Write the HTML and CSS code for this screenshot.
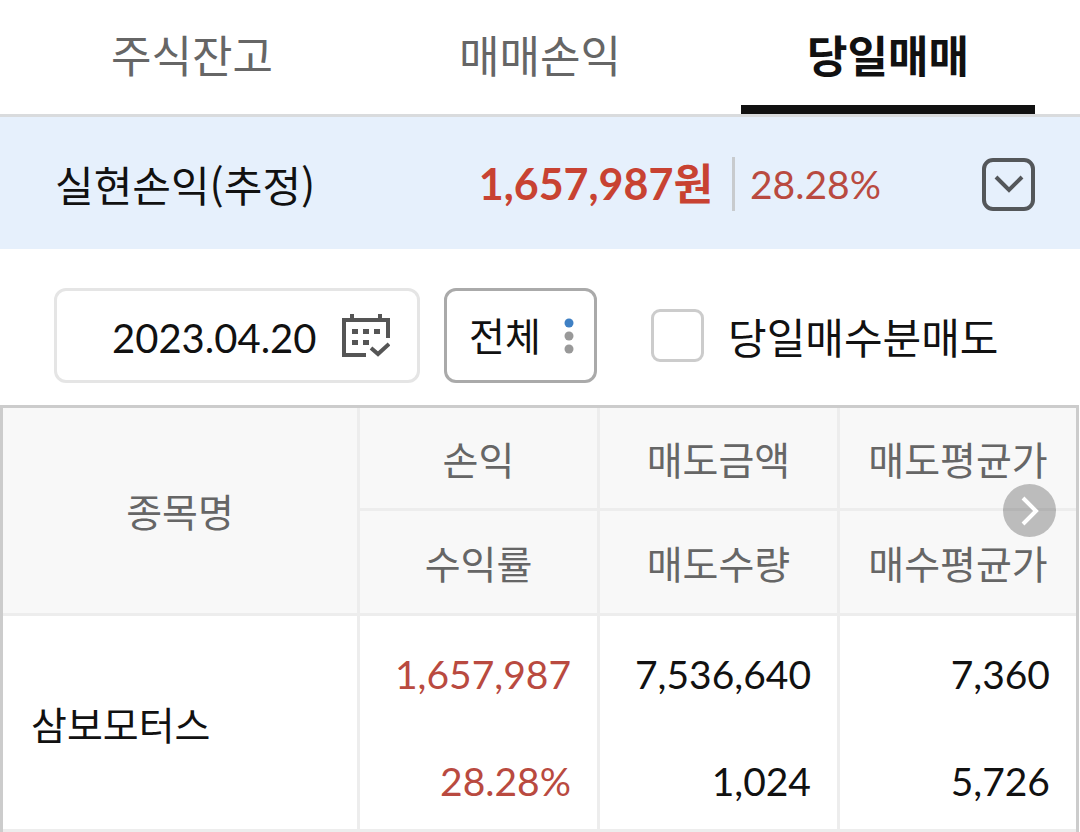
FILE: index.html
```html
<!DOCTYPE html>
<html lang="ko">
<head>
  <meta charset="UTF-8">
  <meta name="viewport" content="width=device-width, initial-scale=1">
  <title>당일매매</title>
  <link rel="stylesheet" href="styles.css">
</head>
<body>
  <nav class="tabs">
    <a class="tab" href="#balance">주식잔고</a>
    <a class="tab" href="#profit">매매손익</a>
    <a class="tab active" href="#today" aria-current="page">당일매매</a>
  </nav>

  <!-- Realized profit summary -->
  <section class="summary">
    <span class="summary-label">실현손익(추정)</span>
    <strong class="summary-amount">1,657,987원</strong>
    <span class="summary-rate">28.28%</span>
    <button class="expand-btn" type="button" aria-label="펼치기">
      <svg width="30" height="18" viewBox="0 0 30 18" fill="none" stroke="#54575a" stroke-width="4">
        <path d="M2 2l13 13L28 2"/>
      </svg>
    </button>
  </section>

  <!-- Filters -->
  <form class="filters">
    <div class="date-box">
      <input class="date-input" type="text" value="2023.04.20" aria-label="조회일자">
      <button class="calendar-btn" type="button" aria-label="달력">
        <svg width="48" height="44" viewBox="0 0 48 44">
          <path d="M24 41H2V6h44v18M10 0v6M38 0v6" fill="none" stroke="#555" stroke-width="4"/>
          <path d="M10 15h6v5h-6zM21 15h6v5h-6zM32 15h6v5h-6zM10 26h6v5h-6zM21 26h6v5h-6z" fill="#555"/>
          <path d="M29 34l7 6L47 30" fill="none" stroke="#555" stroke-width="4"/>
        </svg>
      </button>
    </div>
    <div class="select-box">
      <select class="type-select" aria-label="구분">
        <option>전체</option>
        <option>매수</option>
        <option>매도</option>
      </select>
      <svg width="10" height="36" viewBox="0 0 10 36">
        <circle cx="5" cy="5" r="4.5" fill="#3f80c4"/>
        <circle cx="5" cy="18" r="4.5" fill="#999"/>
        <circle cx="5" cy="31" r="4.5" fill="#999"/>
      </svg>
    </div>
    <div class="check-box">
      <input class="check-input" type="checkbox" id="sameDay">
      <label class="check-label" for="sameDay">당일매수분매도</label>
    </div>
  </form>

  <!-- Trade list -->
  <div class="table-wrap">
    <table class="trades">
      <colgroup>
        <col class="col-name">
        <col class="col-value">
        <col class="col-value">
        <col>
      </colgroup>
      <thead>
        <tr class="head-top">
          <th rowspan="2">종목명</th>
          <th>손익</th>
          <th>매도금액</th>
          <th>매도평균가</th>
        </tr>
        <tr class="head-bottom">
          <th>수익률</th>
          <th>매도수량</th>
          <th>매수평균가</th>
        </tr>
      </thead>
      <tbody>
        <tr class="row-top">
          <td class="name" rowspan="2">삼보모터스</td>
          <td class="up">1,657,987</td>
          <td>7,536,640</td>
          <td>7,360</td>
        </tr>
        <tr class="row-bottom">
          <td class="up">28.28%</td>
          <td>1,024</td>
          <td>5,726</td>
        </tr>
      </tbody>
    </table>
    <button class="scroll-btn" type="button" aria-label="다음 항목">
      <svg width="20" height="32" viewBox="0 0 20 32" fill="none" stroke="#fff" stroke-width="4">
        <path d="M3 3l13 13L3 29"/>
      </svg>
    </button>
  </div>
</body>
</html>
```
FILE: styles.css
```css
* {
  box-sizing: border-box;
}

body {
  margin: 0;
  background: #fff;
  color: #111;
  font-family: Lato, "Noto Sans CJK KR", sans-serif;
  font-size: 40px;
  line-height: 48px;
}

button,
input,
select {
  margin: 0;
  padding: 0;
  border: none;
  background: none;
  color: inherit;
  font: inherit;
}

svg {
  display: block;
}

/* Tabs */
.tabs {
  display: flex;
  gap: 54px;
  padding: 0 45px;
  border-bottom: 3px solid #d9dbdd;
}

.tab {
  flex: 1;
  height: 114px;
  border-bottom: 9px solid transparent;
  color: #666;
  font-size: 44px;
  line-height: 112px;
  text-align: center;
  text-decoration: none;
}

.tab.active {
  border-color: #111;
  color: #111;
  font-weight: 700;
}

/* Summary */
.summary {
  display: flex;
  align-items: center;
  padding: 40px 45px 38px 55px;
  background: #e6f0fc;
}

.summary-label {
  font-family: "Noto Sans CJK KR", sans-serif;
  font-size: 42px;
}

.summary-amount {
  flex: 1;
  padding-right: 19px;
  border-right: 3px solid #c8cbce;
  color: #c84232;
  font-size: 43px;
  line-height: 54px;
  text-align: right;
}

.summary-rate {
  flex: 0 0 247px;
  padding-left: 15px;
  color: #b94a40;
  font-size: 39px;
}

.expand-btn {
  display: grid;
  place-items: center;
  width: 53px;
  height: 53px;
  border: 4px solid #54575a;
  border-radius: 11px;
}

/* Filters */
.filters {
  display: flex;
  align-items: center;
  padding: 39px 45px 22px 54px;
}

.date-box,
.select-box {
  display: flex;
  align-items: center;
  height: 95px;
  border: 3px solid #e5e5e5;
  border-radius: 12px;
}

.date-box {
  flex: 0 1 366px;
  min-width: 0;
  padding: 0 27px 0 55px;
}

.date-input {
  flex: 1;
  min-width: 0;
  padding-top: 4px;
}

.select-box {
  gap: 24px;
  margin-left: 24px;
  padding: 0 20px 0 22px;
  border-color: #aaa;
}

.type-select {
  width: 71px;
  appearance: none;
  font-size: 39px;
}

.check-box {
  display: flex;
  align-items: center;
  gap: 24px;
  margin-left: 54px;
  font-size: 42px;
  white-space: nowrap;
}

.check-input {
  width: 53px;
  height: 53px;
  appearance: none;
  border: 3px solid #ccc;
  border-radius: 9px;
}

.check-input:checked {
  background: #3f80c4;
}

.check-label {
  padding-top: 4px;
}

/* Table */
.table-wrap {
  position: relative;
  margin-right: 1px;
  border: 3px solid #ccc;
  border-bottom: none;
}

.trades {
  width: 100%;
  border-spacing: 0;
  table-layout: fixed;
}

.col-name {
  width: 357px;
}

.col-value {
  width: 240px;
}

.trades th,
.trades td {
  padding: 0;
  border-right: 3px solid #ededed;
  border-bottom: 3px solid #ededed;
}

.trades th:last-child,
.trades td:last-child {
  border-right: none;
}

.trades th {
  padding-top: 3px;
  background: #f8f8f8;
  color: #666;
  font-size: 39px;
  font-weight: 400;
}

.head-top {
  height: 103px;
}

.head-bottom {
  height: 105px;
}

.row-top,
.row-bottom {
  height: 108px;
}

.trades td {
  padding: 8px 26px 0 0;
  font-size: 39px;
  text-align: right;
}

.trades .row-top td:not(.name) {
  border-bottom: none;
}

.trades .name {
  padding: 4px 0 0 28px;
  text-align: left;
}

.trades .up {
  color: #b94a40;
}

.scroll-btn {
  position: absolute;
  top: 76px;
  right: 20px;
  display: grid;
  place-items: center;
  width: 53px;
  height: 53px;
  border-radius: 50%;
  background: rgba(0, 0, 0, 0.24);
}
```
